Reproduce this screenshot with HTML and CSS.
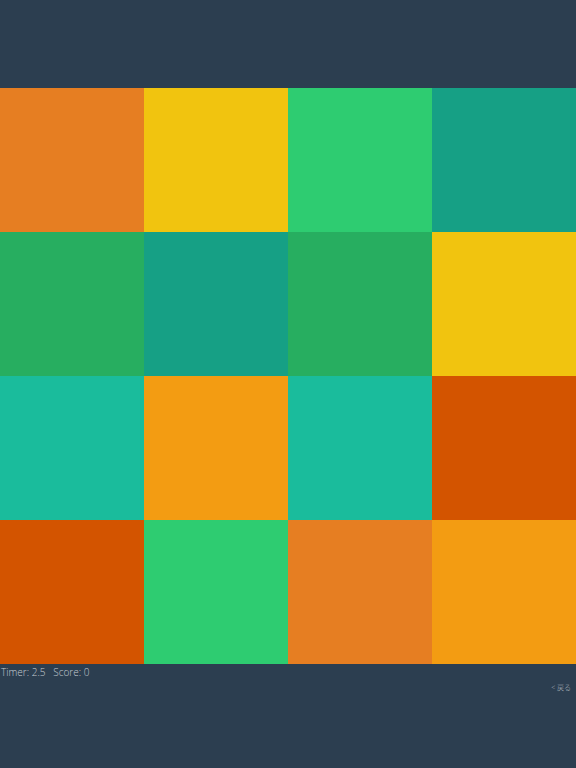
FILE: index.html
```html
<!DOCTYPE html>
<html>
<head>
<meta charset="utf-8">
<link rel="stylesheet" href="styles.css">
</head>
<body>
<div class="top"></div>
<div class="grid">
  <div class="cell c-orange"></div>
  <div class="cell c-sun"></div>
  <div class="cell c-emerald"></div>
  <div class="cell c-sea"></div>
  <div class="cell c-nephritis"></div>
  <div class="cell c-sea"></div>
  <div class="cell c-nephritis"></div>
  <div class="cell c-sun"></div>
  <div class="cell c-turq"></div>
  <div class="cell c-orange2"></div>
  <div class="cell c-turq"></div>
  <div class="cell c-pumpkin"></div>
  <div class="cell c-pumpkin"></div>
  <div class="cell c-emerald"></div>
  <div class="cell c-orange"></div>
  <div class="cell c-orange2"></div>
</div>
<div class="status">Timer: 2.5&nbsp;&nbsp;&nbsp;Score: 0</div>
<div class="back">&lt; 戻る</div>
</body>
</html>
```
FILE: styles.css
```css
html, body {
  margin: 0;
  padding: 0;
  background: #2c3e50;
  width: 576px;
  height: 768px;
  overflow: hidden;
  font-family: "Open Sans", "Noto Sans CJK JP", sans-serif;
  font-weight: 300;
}
.top { height: 88px; }
.grid {
  display: grid;
  grid-template-columns: repeat(4, 144px);
  grid-auto-rows: 144px;
}
.c-orange { background: #e67e22; }
.c-sun { background: #f1c40f; }
.c-emerald { background: #2ecc71; }
.c-sea { background: #16a085; }
.c-nephritis { background: #27ae60; }
.c-turq { background: #1abc9c; }
.c-orange2 { background: #f39c12; }
.c-pumpkin { background: #d35400; }
.status {
  color: #c5ccd3;
  font-size: 10px;
  line-height: 16px;
  padding-left: 1px;
}
.back {
  color: #aab3bc;
  font-size: 7px;
  line-height: 16px;
  text-align: right;
  padding-right: 5px;
}
```
